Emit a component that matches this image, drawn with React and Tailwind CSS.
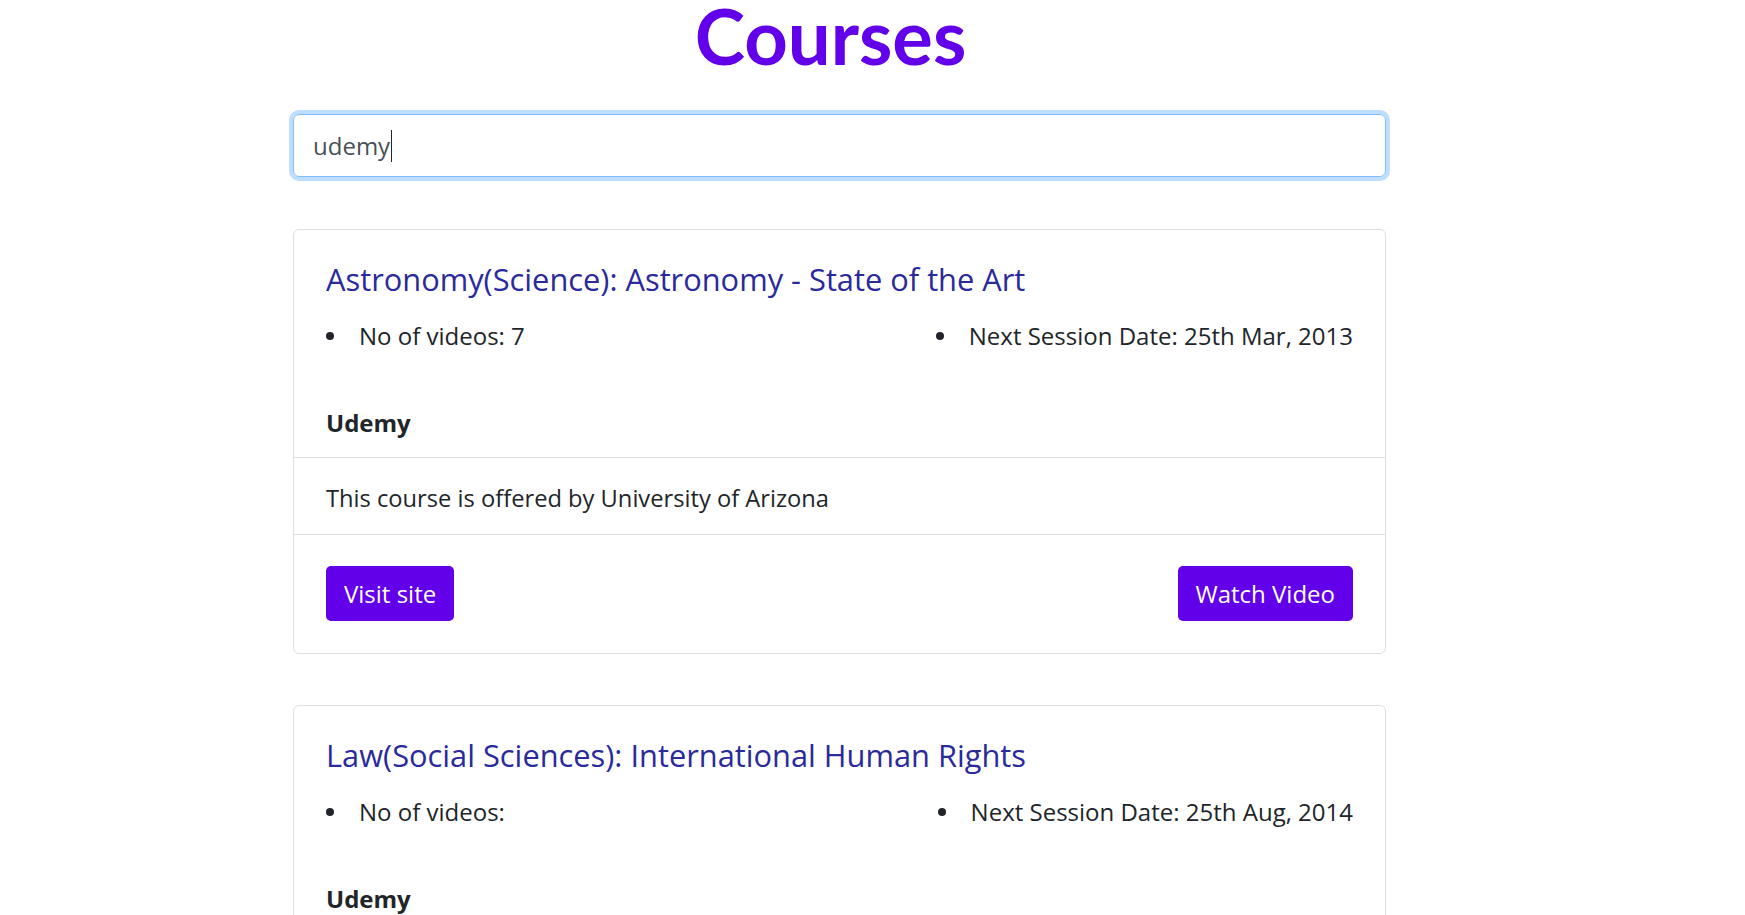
import React from "react";

const courses = [
  {
    title: "Astronomy(Science): Astronomy - State of the Art",
    videos: "7",
    date: "25th Mar, 2013",
    provider: "Udemy",
    offered: "This course is offered by University of Arizona",
  },
  {
    title: "Law(Social Sciences): International Human Rights",
    videos: "",
    date: "25th Aug, 2014",
    provider: "Udemy",
    offered: "This course is offered by Université catholique de Louvain",
  },
];

function Bullet({ children }) {
  return (
    <li className="flex items-center">
      <span className="w-[8px] h-[8px] rounded-full bg-[#212529] mr-[25px]" />
      <span>{children}</span>
    </li>
  );
}

function CourseCard({ c }) {
  return (
    <div className="border border-[#dfdfdf] rounded-[6px] bg-white">
      <div className="px-[32px] pt-[31px] pb-[16px]">
        <h4 className="text-[30.8px] leading-[36px] text-[#2a2a9c] font-normal">{c.title}</h4>
        <ul className="flex justify-between mt-[21px] text-[24px] leading-[36px] text-[#212529]">
          <Bullet>No of videos: {c.videos}</Bullet>
          <Bullet>Next Session Date: {c.date}</Bullet>
        </ul>
        <div className="mt-[51px] text-[24px] leading-[36px] font-bold text-[#212529]">{c.provider}</div>
      </div>
      <div className="border-t border-[#dfdfdf] px-[32px] pt-[22px] pb-[18px] text-[23.7px] leading-[36px] text-[#212529]">
        {c.offered}
      </div>
      <div className="border-t border-[#dfdfdf] px-[32px] pt-[31px] pb-[32px] flex justify-between">
        <button className="h-[55px] px-[18px] rounded-[5px] bg-[#6200ea] text-white text-[24px] leading-[36px]">
          Visit site
        </button>
        <button className="h-[55px] px-[18px] rounded-[5px] bg-[#6200ea] text-white text-[24px] leading-[36px]">
          Watch Video
        </button>
      </div>
    </div>
  );
}

export default function App() {
  return (
    <div className="min-h-screen bg-white" style={{ fontFamily: '"Open Sans", "Noto Sans", sans-serif' }}>
      <div className="ml-[293px] w-[1093px]">
        <h1
          className="text-center text-[76px] leading-[72px] font-bold text-[#6200ea] pr-[18px]"
          style={{ fontFamily: 'Lato, "Open Sans", sans-serif' }}
        >
          Courses
        </h1>
        <div className="mt-[42px] h-[63px] border border-[#80bdff] rounded-[6px] shadow-[0_0_0_4px_rgba(0,123,255,0.25)] flex items-center pl-[19px] text-[24px] text-[#495057]">
          <span>udemy</span>
          <span className="w-px h-[32px] bg-[#212529] ml-px" />
        </div>
        <div className="mt-[52px] flex flex-col gap-[51px]">
          {courses.map((c) => (
            <CourseCard key={c.title} c={c} />
          ))}
        </div>
      </div>
    </div>
  );
}
